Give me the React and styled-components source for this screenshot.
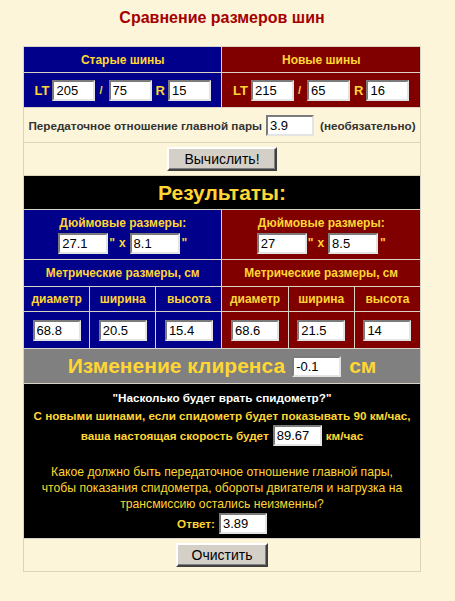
import React from 'react'
import styled, {createGlobalStyle} from 'styled-components'

const GlobalStyle = createGlobalStyle`
  body {
    margin: 0;
    background: #fdf5da;
    font-family: "Liberation Sans", Arial, sans-serif;
  }
`

const tones = {
  blue: '#00008b',
  red: '#800000',
  cream: 'transparent',
  black: '#000000',
  grey: '#808080',
}

const Page = styled.div`
  width: 444px;
  padding-top: 8px;
`

const Title = styled.h1`
  margin: 0 0 18px;
  font-size: 16px;
  line-height: 20px;
  font-weight: bold;
  color: #a50000;
  text-align: center;
`

const Table = styled.table`
  width: 398px;
  margin: 0 auto;
  border-collapse: collapse;
  table-layout: fixed;
  border: 1px solid #c9c0a6;
`

const Row = styled.tr`
  height: ${p => p.$h}px;
`

const Cell = styled.td`
  background: ${p => tones[p.$tone || 'cream']};
  border: 1px solid ${p => (p.$tone && p.$tone !== 'cream' ? '#d9d3c6' : '#ddd3b6')};
  padding: 0;
  text-align: center;
  vertical-align: middle;
  color: #ffd633;
  font-weight: bold;
  font-size: ${p => p.$size || 12}px;
`

const Line = styled.div`
  display: flex;
  justify-content: center;
  align-items: center;
  white-space: nowrap;
`

const Tag = styled.span`
  margin: 0 ${p => p.$r ?? 0}px 0 ${p => p.$l ?? 0}px;
  font-size: ${p => p.$size || 13}px;
  font-weight: ${p => (p.$plain ? 'normal' : 'bold')};
  color: ${p => p.$color || 'inherit'};
`

const Field = styled.input`
  box-sizing: border-box;
  width: ${p => p.$w}px;
  height: 21px;
  padding: 1px 2px 0;
  border: 2px solid;
  border-color: #7b7b7b #e4e4e4 #e4e4e4 #7b7b7b;
  background: #ffffff;
  color: #000000;
  font-family: "Liberation Sans", Arial, sans-serif;
  font-size: 13px;
  outline: none;
`

const Button = styled.button`
  box-sizing: border-box;
  width: ${p => p.$w}px;
  height: 24px;
  background: #d4d0c8;
  border: 2px solid;
  border-color: #ffffff #404040 #404040 #ffffff;
  box-shadow: inset -1px -1px 0 #808080;
  font-family: "Liberation Sans", Arial, sans-serif;
  font-size: 14px;
  color: #000000;
  padding: 0;
`

const GearText = styled.span`
  font-size: 11.7px;
  font-weight: bold;
  color: #333333;
`

const Hint = styled.span`
  font-size: 11.7px;
  color: #333333;
`

const Big = styled.span`
  font-size: ${p => p.$size || 21}px;
  font-weight: bold;
  color: #ffd633;
`

const Speedo = styled.div`
  display: flex;
  flex-direction: column;
  padding: 4px 0 4px;
`

const SpeedLine = styled(Line)`
  height: ${p => p.$h || 18}px;
  margin-top: ${p => p.$gap || 0}px;
  font-size: ${p => p.$size || 11.7}px;
  font-weight: ${p => (p.$plain ? 'normal' : 'bold')};
  color: ${p => p.$color || '#ffd633'};
`

const TireInputs = ({values}) => (
  <Line>
    <Tag $r={3}>LT</Tag>
    <Field $w={43} defaultValue={values[0]} />
    <Tag $l={4} $r={6} $size={11}>/</Tag>
    <Field $w={43} defaultValue={values[1]} />
    <Tag $l={4} $r={3}>R</Tag>
    <Field $w={43} defaultValue={values[2]} />
  </Line>
)

const InchBlock = ({a, b}) => (
  <>
    <div>Дюймовые размеры:</div>
    <Line style={{marginTop: 3}}>
      <Field $w={50} defaultValue={a} />
      <Tag $l={1} $r={4} $size={12}>"</Tag>
      <Tag $r={4} $size={12}>x</Tag>
      <Field $w={50} defaultValue={b} />
      <Tag $l={2} $size={12}>"</Tag>
    </Line>
  </>
)

const oldMetric = ['68.8', '20.5', '15.4']
const newMetric = ['68.6', '21.5', '14']
const columns = ['диаметр', 'ширина', 'высота']

export default function App() {
  return (
    <Page>
      <GlobalStyle />
      <Title>Сравнение размеров шин</Title>
      <Table>
        <colgroup>
          {[0, 1, 2, 3, 4, 5].map(i => <col key={i} />)}
        </colgroup>
        <tbody>
          <Row $h={26}>
            <Cell colSpan={3} $tone="blue">Старые шины</Cell>
            <Cell colSpan={3} $tone="red">Новые шины</Cell>
          </Row>
          <Row $h={35}>
            <Cell colSpan={3} $tone="blue"><TireInputs values={['205', '75', '15']} /></Cell>
            <Cell colSpan={3} $tone="red"><TireInputs values={['215', '65', '16']} /></Cell>
          </Row>
          <Row $h={35}>
            <Cell colSpan={6}>
              <Line>
                <GearText>Передаточное отношение главной пары</GearText>
                <Field $w={48} defaultValue="3.9" style={{margin: '0 6px 0 4px'}} />
                <Hint>(необязательно)</Hint>
              </Line>
            </Cell>
          </Row>
          <Row $h={33}>
            <Cell colSpan={6}><Button $w={110}>Вычислить!</Button></Cell>
          </Row>
          <Row $h={34}>
            <Cell colSpan={6} $tone="black"><Big>Результаты:</Big></Cell>
          </Row>
          <Row $h={50}>
            <Cell colSpan={3} $tone="blue"><InchBlock a="27.1" b="8.1" /></Cell>
            <Cell colSpan={3} $tone="red"><InchBlock a="27" b="8.5" /></Cell>
          </Row>
          <Row $h={27}>
            <Cell colSpan={3} $tone="blue" $size={11.85}>Метрические размеры, см</Cell>
            <Cell colSpan={3} $tone="red" $size={11.85}>Метрические размеры, см</Cell>
          </Row>
          <Row $h={25}>
            {columns.map(c => <Cell key={'o' + c} $tone="blue">{c}</Cell>)}
            {columns.map(c => <Cell key={'n' + c} $tone="red">{c}</Cell>)}
          </Row>
          <Row $h={37}>
            {oldMetric.map((v, i) => (
              <Cell key={'o' + i} $tone="blue"><Line><Field $w={48} defaultValue={v} /></Line></Cell>
            ))}
            {newMetric.map((v, i) => (
              <Cell key={'n' + i} $tone="red"><Line><Field $w={48} defaultValue={v} /></Line></Cell>
            ))}
          </Row>
          <Row $h={35}>
            <Cell colSpan={6} $tone="grey">
              <Line>
                <Big>Изменение клиренса</Big>
                <Field $w={49} defaultValue="-0.1" style={{margin: '0 8px 0 7px'}} />
                <Big>см</Big>
              </Line>
            </Cell>
          </Row>
          <Row $h={155}>
            <Cell colSpan={6} $tone="black">
              <Speedo>
                <SpeedLine $color="#ffffff">"Насколько будет врать спидометр?"</SpeedLine>
                <SpeedLine>С новыми шинами, если спидометр будет показывать 90 км/час,</SpeedLine>
                <SpeedLine $h={22}>
                  ваша настоящая скорость будет
                  <Field $w={49} defaultValue="89.67" style={{margin: '0 4px 0 4px'}} />
                  км/час
                </SpeedLine>
                <SpeedLine $h={16} $gap={18} $plain $size={12.2}>Какое должно быть передаточное отношение главной пары,</SpeedLine>
                <SpeedLine $h={16} $plain $size={12.2}>чтобы показания спидометра, обороты двигателя и нагрузка на</SpeedLine>
                <SpeedLine $h={16} $plain $size={12.2}>трансмиссию остались неизменны?</SpeedLine>
                <SpeedLine $h={22}>
                  Ответ:
                  <Field $w={48} defaultValue="3.89" style={{marginLeft: 4}} />
                </SpeedLine>
              </Speedo>
            </Cell>
          </Row>
          <Row $h={33}>
            <Cell colSpan={6}><Button $w={92}>Очистить</Button></Cell>
          </Row>
        </tbody>
      </Table>
    </Page>
  )
}
